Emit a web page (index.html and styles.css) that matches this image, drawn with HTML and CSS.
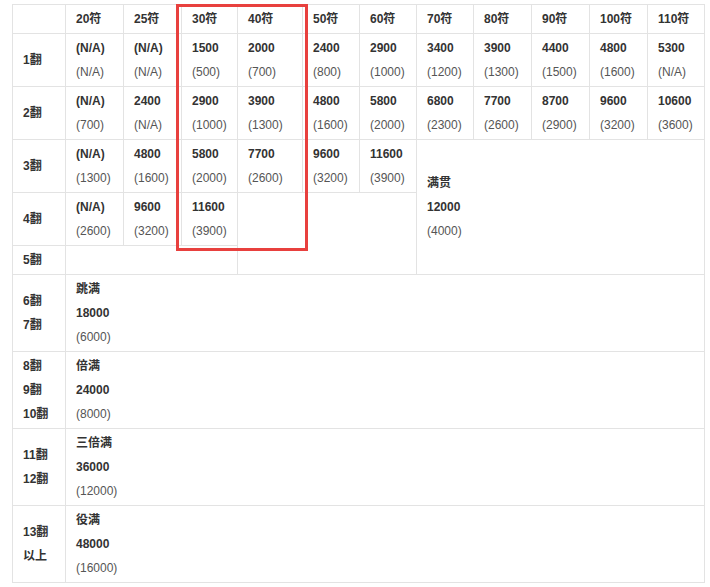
FILE: index.html
```html
<!DOCTYPE html>
<html lang="zh">
<head>
<meta charset="utf-8">
<link rel="stylesheet" href="styles.css">
</head>
<body>
<div class="wrap">
<table class="tbl">
<colgroup>
<col class="c0"><col class="c58"><col class="c58"><col class="c56"><col class="c65"><col class="c57"><col class="c57"><col class="c57"><col class="c58"><col class="c58"><col class="c58"><col class="c57">
</colgroup>
<tr class="hd">
<td></td><td>20符</td><td>25符</td><td>30符</td><td>40符</td><td>50符</td><td>60符</td><td>70符</td><td>80符</td><td>90符</td><td>100符</td><td>110符</td>
</tr>
<tr>
<td class="lab">1翻</td>
<td><b>(N/A)</b><span>(N/A)</span></td>
<td><b>(N/A)</b><span>(N/A)</span></td>
<td><b>1500</b><span>(500)</span></td>
<td><b>2000</b><span>(700)</span></td>
<td><b>2400</b><span>(800)</span></td>
<td><b>2900</b><span>(1000)</span></td>
<td><b>3400</b><span>(1200)</span></td>
<td><b>3900</b><span>(1300)</span></td>
<td><b>4400</b><span>(1500)</span></td>
<td><b>4800</b><span>(1600)</span></td>
<td><b>5300</b><span>(N/A)</span></td>
</tr>
<tr>
<td class="lab">2翻</td>
<td><b>(N/A)</b><span>(700)</span></td>
<td><b>2400</b><span>(N/A)</span></td>
<td><b>2900</b><span>(1000)</span></td>
<td><b>3900</b><span>(1300)</span></td>
<td><b>4800</b><span>(1600)</span></td>
<td><b>5800</b><span>(2000)</span></td>
<td><b>6800</b><span>(2300)</span></td>
<td><b>7700</b><span>(2600)</span></td>
<td><b>8700</b><span>(2900)</span></td>
<td><b>9600</b><span>(3200)</span></td>
<td><b>10600</b><span>(3600)</span></td>
</tr>
<tr>
<td class="lab">3翻</td>
<td><b>(N/A)</b><span>(1300)</span></td>
<td><b>4800</b><span>(1600)</span></td>
<td><b>5800</b><span>(2000)</span></td>
<td><b>7700</b><span>(2600)</span></td>
<td><b>9600</b><span>(3200)</span></td>
<td><b>11600</b><span>(3900)</span></td>
<td class="mid" colspan="5" rowspan="3"><b>满贯</b><b>12000</b><span>(4000)</span></td>
</tr>
<tr>
<td class="lab">4翻</td>
<td><b>(N/A)</b><span>(2600)</span></td>
<td><b>9600</b><span>(3200)</span></td>
<td><b>11600</b><span>(3900)</span></td>
<td colspan="3" rowspan="2"></td>
</tr>
<tr>
<td class="lab">5翻</td>
<td colspan="3"></td>
</tr>
<tr class="big">
<td class="lab">6翻<br>7翻</td>
<td colspan="11"><b>跳满</b><b>18000</b><span>(6000)</span></td>
</tr>
<tr class="big">
<td class="lab">8翻<br>9翻<br>10翻</td>
<td colspan="11"><b>倍满</b><b>24000</b><span>(8000)</span></td>
</tr>
<tr class="big">
<td class="lab">11翻<br>12翻</td>
<td colspan="11"><b>三倍满</b><b>36000</b><span>(12000)</span></td>
</tr>
<tr class="big">
<td class="lab">13翻<br>以上</td>
<td colspan="11"><b>役满</b><b>48000</b><span>(16000)</span></td>
</tr>
</table>
<div class="mark"></div>
</div>
</body>
</html>
```
FILE: styles.css
```css
html, body {
  margin: 0;
  padding: 0;
  background: #ffffff;
}
.wrap {
  position: relative;
  margin: 4px 0 0 12px;
  width: 693px;
}
.tbl {
  border-collapse: collapse;
  table-layout: fixed;
  width: 693px;
  font-family: "Liberation Sans", Arial, "Noto Sans CJK SC", sans-serif;
  font-size: 12px;
  line-height: 24px;
  color: #555555;
}
.c0 { width: 53px; }
.c56 { width: 56px; }
.c57 { width: 57px; }
.c58 { width: 58px; }
.c65 { width: 65px; }
.tbl td {
  border: 1px solid #e3e3e3;
  padding: 2px 10px 2px 10px;
  vertical-align: top;
  text-align: left;
  white-space: nowrap;
}
.tbl b {
  display: block;
  font-weight: bold;
  color: #333333;
}
.tbl span {
  display: block;
}
.tbl .hd td {
  font-weight: bold;
  color: #333333;
}
.tbl td.lab {
  font-weight: bold;
  color: #333333;
  vertical-align: middle;
}
.tbl td.mid {
  vertical-align: middle;
}
.mark {
  position: absolute;
  left: 164px;
  top: 0;
  width: 132px;
  height: 247px;
  box-sizing: border-box;
  border: 3px solid #e8403e;
}
```
